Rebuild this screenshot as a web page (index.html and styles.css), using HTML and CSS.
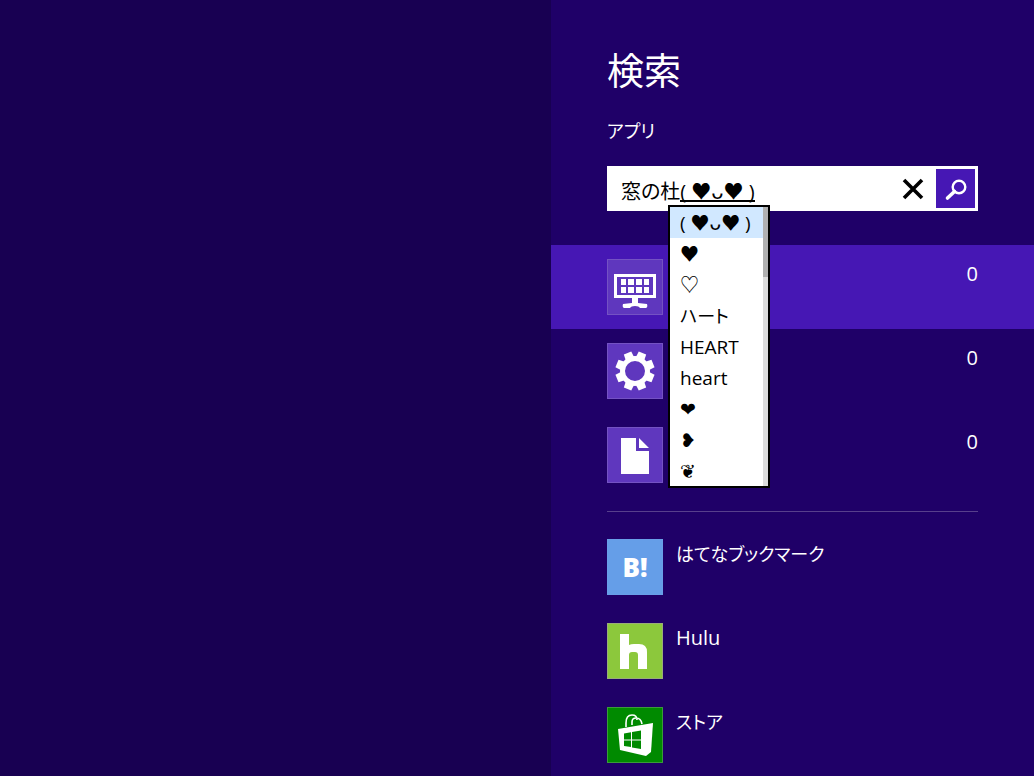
FILE: index.html
```html
<!DOCTYPE html>
<html lang="ja">
<head>
    <meta charset="UTF-8">
    <meta name="viewport" content="width=device-width, initial-scale=1.0">
    <title>検索</title>
    <link rel="stylesheet" href="styles.css">
</head>
<body>

<main class="start-screen"></main>

<aside class="search-panel">
    <h1>検索</h1>
    <label class="scope" for="query">アプリ</label>

    <form class="search-box">
        <input type="text" id="query" value="窓の杜( ♥ᴗ♥ )" autocomplete="off">
        <span class="composition"></span>
        <button type="button" class="clear" aria-label="クリア">
            <svg width="22" height="22" viewBox="0 0 22 22"><path d="M2 2 20 20M20 2 2 20" stroke="#000" stroke-width="3.6"/></svg>
        </button>
        <button type="submit" class="submit" aria-label="検索">
            <svg width="24" height="24" viewBox="0 0 24 24" fill="none" stroke="#fff"><circle cx="15" cy="10" r="6.300" stroke-width="2.400"/><path d="M10.500 14.500 3.500 21" stroke-width="3.600" stroke-linecap="round"/></svg>
        </button>

        <!-- IME candidates -->
        <div class="candidates">
            <ul>
                <li><button type="button" class="selected">( ♥ᴗ♥ )</button></li>
                <li><button type="button">♥</button></li>
                <li><button type="button">♡</button></li>
                <li><button type="button" class="kana">ハート</button></li>
                <li><button type="button">HEART</button></li>
                <li><button type="button">heart</button></li>
                <li><button type="button">❤</button></li>
                <li><button type="button">❥</button></li>
                <li><button type="button">❦</button></li>
            </ul>
            <div class="scrollbar"><div class="thumb"></div></div>
        </div>
    </form>

    <nav class="rows">
        <a href="#" class="row active" aria-label="アプリ">
            <span class="tile">
                <svg width="54" height="54" viewBox="0 0 54 54">
                    <path d="M6 14h42v24H6zM9 17v18h36V17z" fill="#fff" fill-rule="evenodd"/>
                    <path d="M13 19h5v6h-5zM20 19h6v6h-6zM28 19h6v6h-6zM36 19h5v6h-5zM13 27h5v6h-5zM20 27h6v6h-6zM28 27h6v6h-6zM36 27h5v6h-5z" fill="#fff"/>
                    <path d="M24 38h6v5l9 1q1 3-1 4h-6q-1-2-5-2t-5 2h-6q-2-1-1-4l9-1z" fill="#fff"/>
                </svg>
            </span>
            <span class="count">0</span>
        </a>
        <a href="#" class="row" aria-label="設定">
            <span class="tile">
                <svg width="54" height="54" viewBox="0 0 54 54">
                    <circle cx="27" cy="27" r="12.500" fill="none" stroke="#fff" stroke-width="5"/>
                    <g fill="#fff" transform="rotate(22.5 27 27)">
                        <path id="tooth" d="M22.500 14 23 7.500h8l.5 6.500z"/>
                        <use href="#tooth" transform="rotate(45 27 27)"/>
                        <use href="#tooth" transform="rotate(90 27 27)"/>
                        <use href="#tooth" transform="rotate(135 27 27)"/>
                        <use href="#tooth" transform="rotate(180 27 27)"/>
                        <use href="#tooth" transform="rotate(225 27 27)"/>
                        <use href="#tooth" transform="rotate(270 27 27)"/>
                        <use href="#tooth" transform="rotate(315 27 27)"/>
                    </g>
                </svg>
            </span>
            <span class="count">0</span>
        </a>
        <a href="#" class="row" aria-label="ファイル">
            <span class="tile">
                <svg width="54" height="54" viewBox="0 0 54 54" fill="#fff"><path d="M13 10h15v13h13v23H13zM31 10l10 10H31z"/></svg>
            </span>
            <span class="count">0</span>
        </a>
    </nav>

    <hr>

    <nav class="rows">
        <a href="#" class="row">
            <span class="tile hatena">B!</span>
            <span class="name kana">はてなブックマーク</span>
        </a>
        <a href="#" class="row">
            <span class="tile hulu">
                <svg width="54" height="54" viewBox="0 0 54 54"><path d="M12 10h9v11q2-1 5-1h5q8 0 8 8v17h-9V31q0-3-3-3h-3q-3 0-3 3v14h-9z" fill="#fff"/></svg>
            </span>
            <span class="name">Hulu</span>
        </a>
        <a href="#" class="row">
            <span class="tile store">
                <svg width="54" height="54" viewBox="0 0 54 54">
                    <path d="M18 19v-4q0-8 6-8 5 0 5 5M24 17v-3q0-4 4-4 5 0 6 6" fill="none" stroke="#fff" stroke-width="1.600"/>
                    <path d="M10 21 45 15 43 44 38 48 12 42z" fill="#fff"/>
                    <path d="M16 25.500 23 24.300V31.500H16zM24 24 33 22.500V31.500H24zM16 32.500H23V39L16 38zM24 32.500H33V41L24 39.500z" fill="#008a00"/>
                </svg>
            </span>
            <span class="name kana">ストア</span>
        </a>
    </nav>
</aside>

</body>
</html>
```
FILE: styles.css
```css
* {
    box-sizing: border-box;
    margin: 0;
    padding: 0;
}

body {
    display: flex;
    height: 100vh;
    overflow: hidden;
    background: #180052;
    color: #fff;
    font-family: "Open Sans", "Noto Sans CJK JP", "DejaVu Sans", sans-serif;
    font-size: 20px;
    font-feature-settings: "palt";
}

input,
button {
    border: none;
    background: none;
    color: #000;
    font: inherit;
    font-feature-settings: inherit;
}

.start-screen {
    flex: 1;
}

.search-panel {
    width: 483px;
    max-width: 100%;
    padding-top: 46px;
    background: #1f0068;
}

h1 {
    padding: 0 56px;
    font-size: 37px;
    font-weight: 400;
    line-height: 50px;
}

.scope {
    display: block;
    padding: 20px 56px;
    font-size: 18px;
    line-height: 30px;
}

.search-box {
    position: relative;
    display: flex;
    height: 45px;
    margin: 0 56px 34px;
    padding: 3px;
    background: #fff;
}

.search-box input {
    flex: 1;
    min-width: 0;
    padding: 4px 11px 0;
    outline: none;
}

/* underline of the text being composed */
.composition {
    position: absolute;
    left: 73px;
    top: 34px;
    width: 75px;
    height: 2px;
    background: #000;
}

.clear,
.submit {
    display: flex;
    align-items: center;
    justify-content: center;
    width: 39px;
    cursor: pointer;
}

.clear {
    width: 46px;
}

.submit {
    background: #4617b4;
}

.candidates {
    position: absolute;
    z-index: 10;
    left: 61px;
    top: 39px;
    display: flex;
    width: 102px;
    border: 2px solid #000;
    background: #fff;
}

.candidates ul {
    flex: 1;
    list-style: none;
}

.candidates button {
    display: block;
    width: 100%;
    height: 31px;
    padding: 2px 0 0 10px;
    font-size: 19px;
    line-height: 29px;
    text-align: left;
    white-space: nowrap;
}

.candidates .kana {
    font-size: 18px;
}

.candidates .selected {
    background: #d1e8ff;
}

.scrollbar {
    width: 5px;
    background: #dcdcdc;
}

.thumb {
    height: 25%;
    background: #b0b0b0;
}

.row {
    display: flex;
    gap: 13px;
    padding: 14px 56px;
    color: #fff;
    line-height: 30px;
    text-decoration: none;
}

.row.active {
    background: #4617b4;
}

.tile {
    display: flex;
    align-items: center;
    justify-content: center;
    width: 56px;
    height: 56px;
    border: 1px solid #7452c3;
    background: #5f37be;
}

.count {
    margin-left: auto;
}

.name.kana {
    font-size: 18px;
}

.hatena {
    border-color: #699fe8;
    background: #659ee8;
    font-size: 26px;
    font-weight: 800;
}

.hulu {
    border-color: #9aad78;
    background: #8cc83c;
}

.store {
    border-color: #3b9a3b;
    background: #008a00;
}

hr {
    height: 1px;
    margin: 14px 56px 13px;
    border: none;
    background: #573f8c;
}
```
